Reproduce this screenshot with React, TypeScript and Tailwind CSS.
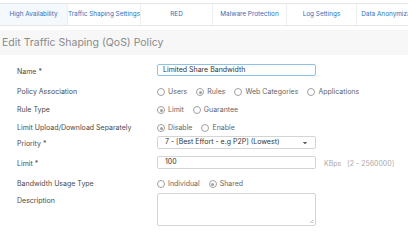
import { ChevronDown } from "lucide-react";

const tabs = [
  { label: "High Availability", w: "w-[67px]", active: true },
  { label: "Traffic Shaping Settings", w: "w-[73px]" },
  { label: "RED", w: "w-[72px]" },
  { label: "Malware Protection", w: "w-[74px]" },
  { label: "Log Settings", w: "w-[70px]" },
  { label: "Data Anonymization", w: "w-[70px]" },
];

const Radio = ({ label, checked }: { label: string; checked?: boolean }) => (
  <span className="flex items-center gap-[3px] mr-[9px] whitespace-nowrap">
    <span className="w-[8px] h-[8px] rounded-full border border-[#a0a0a0] flex items-center justify-center bg-white">
      {checked && <span className="w-[3px] h-[3px] rounded-full bg-[#a0a0a0]" />}
    </span>
    {label}
  </span>
);

const Row = ({ label, children, h }: { label: string; children: React.ReactNode; h: string }) => (
  <div className={`flex ${h}`}>
    <div className="w-[157px] pl-[17px] pt-[3px] text-[#4a4a4a]">{label}</div>
    <div className="flex-1 flex items-start text-[#666]">{children}</div>
  </div>
);

export default function App() {
  return (
    <div className="w-[408px] h-[240px] overflow-hidden bg-white font-['Inter',sans-serif] text-[7px]">
      {/* tab strip */}
      <div className="mt-[3px] h-[23px] flex border-y border-[#e6e6e6] whitespace-nowrap">
        {tabs.map((t, i) => (
          <div
            key={t.label}
            className={`${t.w} shrink-0 flex items-center justify-center text-[6.4px] text-[#2f72b8] ${i > 0 ? "border-l border-[#eeeeee]" : ""} ${t.active ? "bg-[#f4f9fd]" : ""}`}
          >
            {t.label}
          </div>
        ))}
      </div>

      {/* heading */}
      <div className="mt-[4px] h-[25px] bg-[#f7f7f7] flex items-center pl-[2px] text-[10.5px] text-[#8a8a8a]">
        Edit Traffic Shaping (QoS) Policy
      </div>

      {/* form */}
      <div className="pt-[9px]">
        <Row label="Name *" h="h-[20px]">
          <div className="w-[159px] h-[12px] border border-[#8fc0e6] rounded-[2px] flex items-center pl-[5px] text-[#333]">
            Limited Share Bandwidth
          </div>
        </Row>
        <Row label="Policy Association" h="h-[18px]">
          <div className="flex items-center pt-[3px]">
            <Radio label="Users" />
            <Radio label="Rules" checked />
            <Radio label="Web Categories" />
            <Radio label="Applications" />
          </div>
        </Row>
        <Row label="Rule Type" h="h-[18px]">
          <div className="flex items-center pt-[3px]">
            <Radio label="Limit" checked />
            <Radio label="Guarantee" />
          </div>
        </Row>
        <Row label="Limit Upload/Download Separately" h="h-[16px]">
          <div className="flex items-center pt-[3px]">
            <Radio label="Disable" checked />
            <Radio label="Enable" />
          </div>
        </Row>
        <Row label="Priority *" h="h-[20px]">
          <div className="w-[159px] h-[13px] border border-[#d4d4d4] rounded-[2px] flex items-center justify-between px-[7px] text-[#333]">
            <span>7 - [Best Effort - e.g P2P] (Lowest)</span>
            <ChevronDown className="w-[6px] h-[6px] text-[#333]" fill="#333" strokeWidth={3} />
          </div>
        </Row>
        <Row label="Limit *" h="h-[20px]">
          <div className="w-[159px] h-[13px] border border-[#d4d4d4] rounded-[2px] flex items-center pl-[7px] text-[#333]">
            100
          </div>
          <span className="ml-[8px] pt-[3px] text-[#aaa] whitespace-nowrap">
            KBps&nbsp;&nbsp;&nbsp;[2 - 2560000]
          </span>
        </Row>
        <Row label="Bandwidth Usage Type" h="h-[17px]">
          <div className="flex items-center pt-[3px]">
            <Radio label="Individual" />
            <Radio label="Shared" checked />
          </div>
        </Row>
        <Row label="Description" h="h-[40px]">
          <div className="relative w-[159px] h-[33px] border border-[#d4d4d4] rounded-[2px]">
            <svg className="absolute right-[1px] bottom-[1px]" width="5" height="5" viewBox="0 0 5 5">
              <path d="M1 4 L4 1 M3 4 L4 3" stroke="#aaa" strokeWidth="0.8" />
            </svg>
          </div>
        </Row>
      </div>
    </div>
  );
}
